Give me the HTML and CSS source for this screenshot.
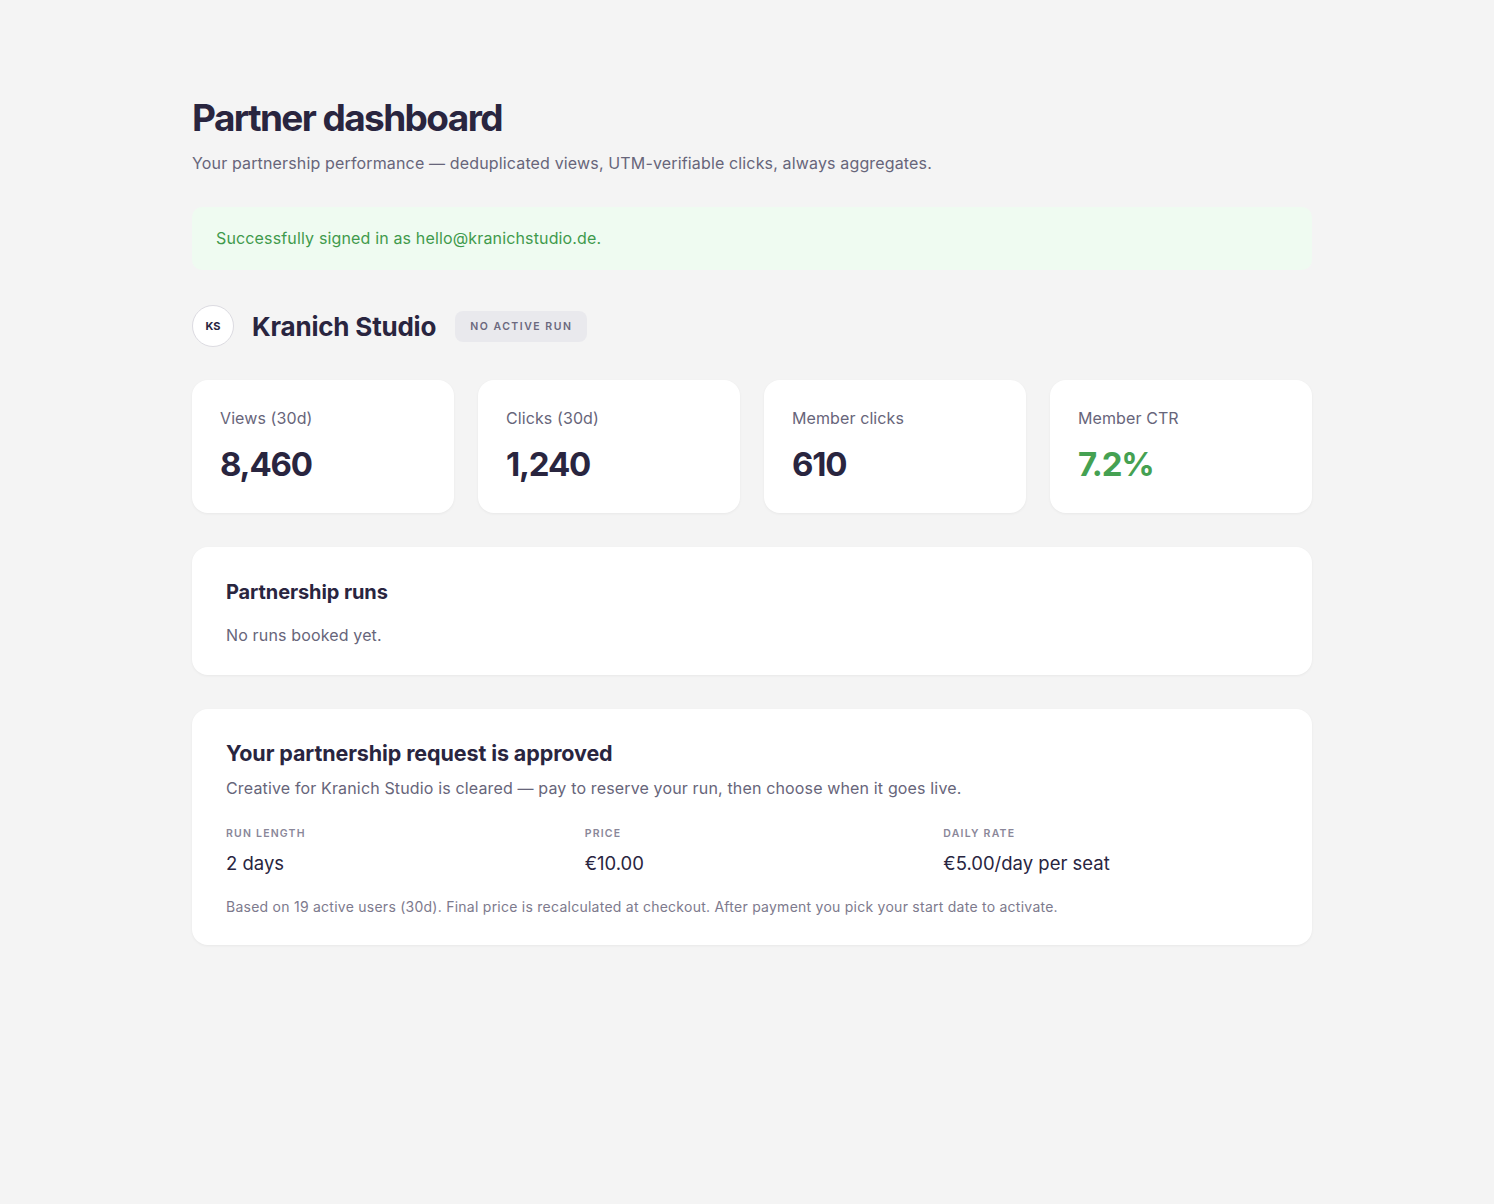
FILE: index.html
```html
<!DOCTYPE html>
<html lang="en">
<head>
    <meta charset="UTF-8">
    <title>Partner dashboard</title>
    <link rel="stylesheet" href="styles.css">
</head>
<body>
    <main class="page">
        <h1 class="page-title">Partner dashboard</h1>
        <p class="page-sub">Your partnership performance — deduplicated views, UTM-verifiable clicks, always aggregates.</p>

        <div class="alert-success">Successfully signed in as hello@kranichstudio.de.</div>

        <div class="partner-head">
            <div class="avatar">KS</div>
            <h2 class="partner-name">Kranich Studio</h2>
            <span class="badge">No active run</span>
        </div>

        <div class="stats">
            <div class="stat-card">
                <div class="stat-label">Views (30d)</div>
                <div class="stat-value">8,460</div>
            </div>
            <div class="stat-card">
                <div class="stat-label">Clicks (30d)</div>
                <div class="stat-value">1,240</div>
            </div>
            <div class="stat-card">
                <div class="stat-label">Member clicks</div>
                <div class="stat-value">610</div>
            </div>
            <div class="stat-card">
                <div class="stat-label">Member CTR</div>
                <div class="stat-value good">7.2%</div>
            </div>
        </div>

        <section class="panel runs">
            <h3 class="panel-title">Partnership runs</h3>
            <p class="panel-text empty">No runs booked yet.</p>
        </section>

        <section class="panel">
            <h3 class="panel-title big">Your partnership request is approved</h3>
            <p class="panel-text">Creative for Kranich Studio is cleared — pay to reserve your run, then choose when it goes live.</p>
            <div class="terms">
                <div>
                    <div class="term-label">Run length</div>
                    <div class="term-value">2 days</div>
                </div>
                <div>
                    <div class="term-label">Price</div>
                    <div class="term-value">€10.00</div>
                </div>
                <div>
                    <div class="term-label">Daily rate</div>
                    <div class="term-value">€5.00/day per seat</div>
                </div>
            </div>
            <p class="note">Based on 19 active users (30d). Final price is recalculated at checkout. After payment you pick your start date to activate.</p>
        </section>
    </main>
</body>
</html>
```

FILE: styles.css
```css
body {
    margin: 0;
    background-color: #f4f4f4;
    font-family: Inter, "Open Sans", sans-serif;
    color: #29253f;
}
.page {
    max-width: 1120px;
    margin: 0 auto;
    padding: 96px 0 80px 10px;
}
.page-title {
    font-size: 37px;
    font-weight: 700;
    letter-spacing: -1.6px;
    margin: 0;
    line-height: 44px;
}
.page-sub {
    margin: 13px 0 0;
    font-size: 16px;
    letter-spacing: 0.15px;
    color: #67657a;
}
.alert-success {
    margin-top: 34px;
    background-color: #effbf1;
    color: #3f9a4c;
    border-radius: 10px;
    padding: 21px 24px 22px;
    font-size: 16px;
    letter-spacing: 0.15px;
    line-height: 20px;
}
.partner-head {
    display: flex;
    align-items: center;
    margin-top: 35px;
}
.avatar {
    width: 40px;
    height: 40px;
    border-radius: 50%;
    border: 1px solid #dcdbe1;
    background-color: #fff;
    display: flex;
    align-items: center;
    justify-content: center;
    font-size: 11px;
    font-weight: 700;
    color: #29253f;
}
.partner-name {
    margin: 0 0 0 18px;
    font-size: 26px;
    font-weight: 700;
    letter-spacing: -0.2px;
}
.badge {
    margin-left: 19px;
    background-color: #e9e9ed;
    border-radius: 8px;
    padding: 9px 15px;
    font-size: 10.5px;
    font-weight: 600;
    letter-spacing: 1.5px;
    text-transform: uppercase;
    color: #6b687d;
}
.stats {
    display: grid;
    grid-template-columns: repeat(4, 1fr);
    gap: 24px;
    margin-top: 33px;
}
.stat-card,
.panel {
    background-color: #fff;
    border-radius: 16px;
    box-shadow: 0 1px 3px rgba(0, 0, 0, 0.05);
}
.stat-card {
    padding: 28px 28px 29px;
}
.stat-label {
    font-size: 16px;
    letter-spacing: 0.1px;
    color: #67657a;
}
.stat-value {
    margin-top: 16px;
    font-size: 33px;
    font-weight: 700;
    letter-spacing: -1.2px;
    line-height: 40px;
}
.stat-value.good {
    color: #45a152;
}
.panel {
    margin-top: 34px;
    padding: 31px 34px 30px;
}
.panel.runs {
    padding-top: 33px;
}
.panel-title {
    margin: 0;
    font-size: 20px;
    font-weight: 700;
    letter-spacing: -0.1px;
}
.panel-title.big {
    font-size: 21.5px;
}
.panel-text {
    margin: 12px 0 0;
    font-size: 16px;
    letter-spacing: 0.15px;
    color: #67657a;
}
.panel-text.empty {
    margin-top: 21px;
}
.terms {
    display: grid;
    grid-template-columns: repeat(3, 1fr);
    gap: 24px;
    margin-top: 29px;
}
.term-label {
    font-size: 10.5px;
    font-weight: 600;
    letter-spacing: 1.2px;
    text-transform: uppercase;
    color: #8a8799;
}
.term-value {
    margin-top: 12px;
    font-size: 18.5px;
    color: #29253f;
}
.note {
    margin: 24px 0 0;
    font-size: 14px;
    letter-spacing: 0.25px;
    color: #7d7a8d;
}
```
